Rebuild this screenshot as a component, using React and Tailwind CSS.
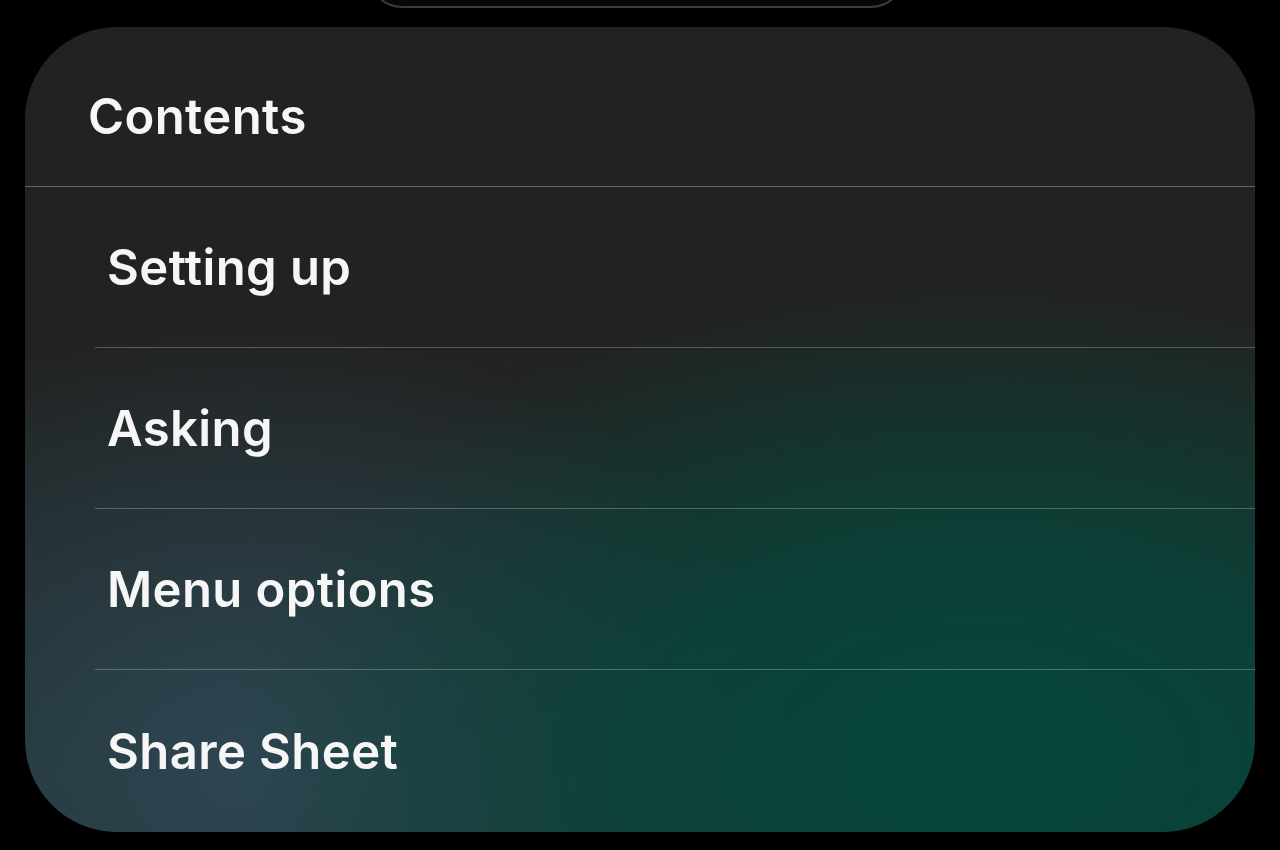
import React from "react";

const items = ["Setting up", "Asking", "Menu options", "Share Sheet"];

const App = () => {
  return (
    <div className="w-[1280px] h-[850px] bg-black overflow-hidden font-['Inter','Noto_Sans',sans-serif] text-[#f6f6f6]">
      {/* bottom edge of the card above */}
      <div className="-mt-[34px] ml-[368px] w-[537px] h-[42px] rounded-b-[34px] border-2 border-t-0 border-[#3b3b3b] bg-[#070707]" />

      <div className="mt-[19px] ml-[25px] w-[1230px] h-[805px] rounded-[92px] overflow-hidden flex flex-col bg-[#222222] bg-[radial-gradient(ellipse_760px_470px_at_78%_90%,rgba(5,71,58,1),rgba(5,71,58,0.75)_45%,rgba(5,71,58,0)_100%),radial-gradient(ellipse_560px_440px_at_18%_92%,rgba(46,70,82,1),rgba(46,70,82,0.5)_50%,rgba(46,70,82,0)_100%),linear-gradient(to_bottom,#222222_0%,#222222_38%,#1f3030_100%)]">
        <div className="h-[159px] shrink-0 flex items-center pt-[20px] pl-[63px]">
          <h1 className="text-[49px] font-semibold tracking-[0.4px] leading-none">
            Contents
          </h1>
        </div>
        <div className="h-px shrink-0 bg-white/30" />

        {items.map((item, i) => (
          <div
            key={item}
            className={
              i < items.length - 1
                ? "ml-[70px] h-[161px] shrink-0 flex items-center pl-[12px] border-b border-white/25"
                : "ml-[70px] flex-1 flex items-center pl-[12px]"
            }
          >
            <span className="text-[49px] font-semibold tracking-[0.4px] leading-none">
              {item}
            </span>
          </div>
        ))}
      </div>
    </div>
  );
};

export default App;
